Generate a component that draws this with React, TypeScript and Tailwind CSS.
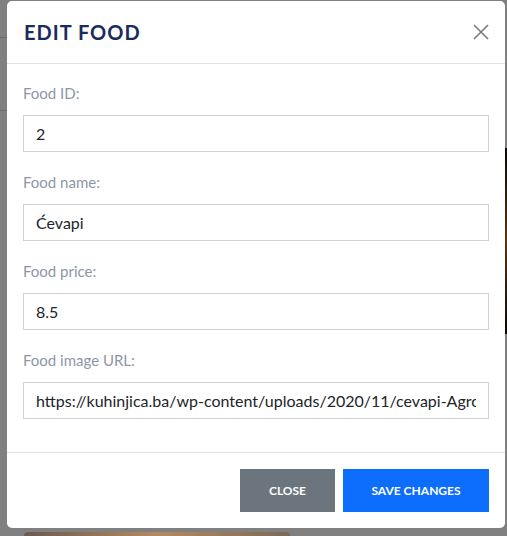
type FieldProps = {
  label: string;
  value: string;
};

function Field({ label, value }: FieldProps) {
  return (
    <div className="flex flex-col gap-[11px]">
      <label className="text-[15px] leading-[22px] text-[#8e96a8]">{label}</label>
      <input
        readOnly
        value={value}
        className="h-[37px] w-full border border-[#ced2d9] bg-white px-3 text-[16px] text-[#212529] outline-none"
      />
    </div>
  );
}

export default function App() {
  return (
    <div
      className="relative h-[536px] w-[507px] overflow-hidden bg-[#808080] pl-[7px] pt-px"
      style={{ fontFamily: "Lato, 'Open Sans', sans-serif" }}
    >
      {/* page behind the backdrop */}
      <div className="absolute left-0 top-[37px] h-px w-[7px] bg-[#6d6d6d]" />
      <div className="absolute left-0 top-[110px] h-px w-[7px] bg-[#6d6d6d]" />
      <div className="absolute right-0 top-[148px] h-[186px] w-[2px] bg-gradient-to-b from-[#0a0805] via-[#5a3510] to-[#0a0805]" />
      <div className="absolute bottom-0 left-[24px] h-[4px] w-[266px] rounded-t-[4px] bg-gradient-to-r from-[#6a5a50] via-[#b58a60] to-[#7a6a5a]" />

      <div className="relative flex h-[527px] w-[498px] flex-col rounded-[5px] bg-white">
        <div className="flex h-[63px] items-center justify-between border-b border-[#dee2e6] pl-[17px] pr-4">
          <h2 className="text-[20px] font-bold tracking-[0.05em] text-[#1a2b5e]">EDIT FOOD</h2>
          <svg width="16" height="16" viewBox="0 0 16 16" className="mb-[1px]">
            <path d="M1 1L15 15M15 1L1 15" stroke="#7a7a7a" strokeWidth="1.6" fill="none" />
          </svg>
        </div>

        <div className="flex flex-1 flex-col gap-[19px] px-4 pt-[18px]">
          <Field label="Food ID:" value="2" />
          <Field label="Food name:" value="Ćevapi" />
          <Field label="Food price:" value="8.5" />
          <Field
            label="Food image URL:"
            value="https://kuhinjica.ba/wp-content/uploads/2020/11/cevapi-Agrokor.jpg"
          />
        </div>

        <div className="flex h-[76px] items-center justify-end gap-2 border-t border-[#dee2e6] px-4">
          <button className="h-[43px] w-[95px] bg-[#6c757d] text-[12px] font-bold text-white">CLOSE</button>
          <button className="h-[43px] w-[146px] bg-[#0d6efd] text-[12px] font-bold text-white">
            SAVE CHANGES
          </button>
        </div>
      </div>
    </div>
  );
}
